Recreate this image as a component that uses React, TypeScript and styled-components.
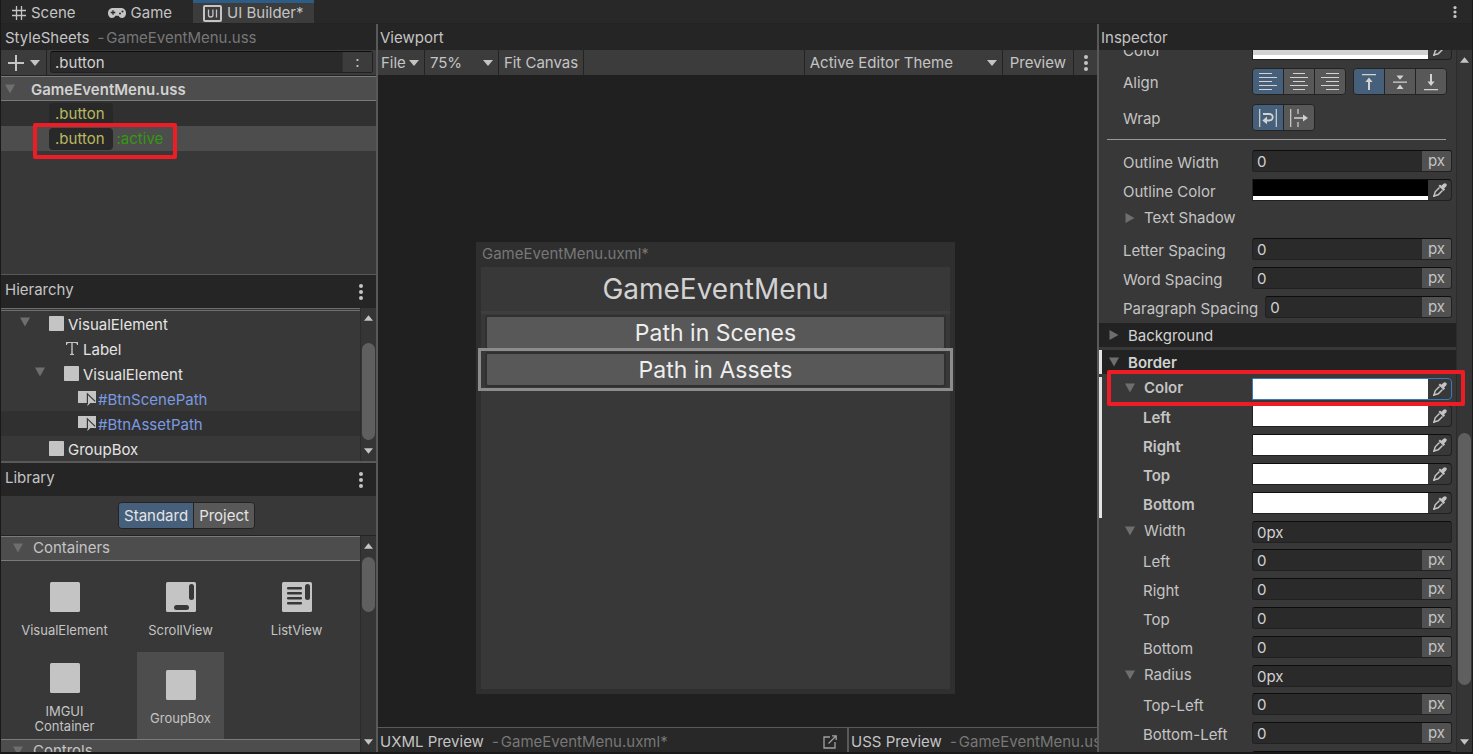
import React, { useId } from "react";
import styled, { createGlobalStyle, css } from "styled-components";

const GlobalStyle = createGlobalStyle`
  *, *::before, *::after { box-sizing: border-box; }
  body {
    margin: 0;
    background: #191919;
    color: #c4c4c4;
    font: 15px/20px Inter, "Liberation Sans", sans-serif;
  }
  button, input, select {
    margin: 0;
    padding: 0;
    border: 0;
    border-radius: 0;
    background: none;
    color: inherit;
    font: inherit;
    outline: none;
  }
  h1, h2, p, ul { margin: 0; padding: 0; font: inherit; list-style: none; }
`;

/* ---------- icons ---------- */

const Glyph = styled.svg`
  display: block;
  flex: none;
`;

const Caret = ({ dir = "down", size = "m" }: { dir?: "down" | "up"; size?: "m" | "s" }) => (
  <Glyph width={size === "m" ? 10 : 9} height="6" viewBox="0 0 10 6" fill="#c4c4c4">
    <path d={dir === "down" ? "M0 0h10L5 6z" : "M0 6h10L5 0z"} />
  </Glyph>
);

const FoldArrow = ({ open = true }: { open?: boolean }) => (
  <Glyph width="10" height="10" viewBox="0 0 10 10" fill="#6e6e6e">
    <path d={open ? "M0 0.5h10L5 9.5z" : "M0.5 0v10L9.5 5z"} />
  </Glyph>
);

const Dots = () => (
  <Glyph width="4" height="16" viewBox="0 0 4 16" fill="#c4c4c4">
    <circle cx="2" cy="2" r="2" />
    <circle cx="2" cy="8" r="2" />
    <circle cx="2" cy="14" r="2" />
  </Glyph>
);

const SmallDots = () => (
  <Glyph width="4" height="12" viewBox="0 0 4 12" fill="#c4c4c4">
    <circle cx="2" cy="1.6" r="1.6" />
    <circle cx="2" cy="6" r="1.6" />
    <circle cx="2" cy="10.4" r="1.6" />
  </Glyph>
);

const SceneIcon = () => (
  <Glyph width="14" height="14" viewBox="0 0 14 14" stroke="#c4c4c4" strokeWidth="1.3">
    <path d="M4.5 0v14M9.5 0v14M0 4.5h14M0 9.5h14" />
  </Glyph>
);

const GameIcon = () => (
  <Glyph width="18" height="10" viewBox="0 0 18 10">
    <path
      d="M5 0h8c3 0 5 2.3 5 5s-1.6 5-4 5c-1.6 0-2.6-1-3.4-2.300H7.400C6.600 9 5.600 10 4 10 1.600 10 0 7.700 0 5s2-5 5-5z"
      fill="#c4c4c4"
    />
    <path d="M5 2.200v4.600M2.700 4.500h4.600" stroke="#282828" strokeWidth="1.300" />
    <circle cx="12" cy="5.500" r="1" fill="#282828" />
    <circle cx="14.500" cy="3.500" r="1" fill="#282828" />
  </Glyph>
);

const UiIcon = () => (
  <Glyph width="19" height="17" viewBox="0 0 19 17" fill="none" stroke="#c4c4c4">
    <rect x="1" y="1" width="17" height="15" rx="1" strokeWidth="2" />
    <path d="M5.500 4.500v5.500q0 2 2.200 2t2.200-2V4.500M13.500 4.500v8" strokeWidth="1.300" />
  </Glyph>
);

const PlusIcon = () => (
  <Glyph width="16" height="16" viewBox="0 0 16 16" stroke="#c4c4c4" strokeWidth="2">
    <path d="M8 0v16M0 8h16" />
  </Glyph>
);

const BoxIcon = ({ size = 15 }: { size?: number }) => (
  <Glyph width={size} height={size} viewBox="0 0 30 30">
    <rect width="30" height="30" rx="1.500" fill="#c4c4c4" />
  </Glyph>
);

const LabelIcon = () => (
  <Glyph width="12" height="13" viewBox="0 0 12 13" fill="#c4c4c4">
    <path d="M0 0h12v3h-1c0-1.300-.6-2-2-2H6.700v10c0 .7.300 1 1.300 1v1H4v-1c1 0 1.300-.3 1.300-1V1H3c-1.400 0-2 .7-2 2H0z" />
  </Glyph>
);

const ButtonIcon = () => (
  <Glyph width="18" height="15" viewBox="0 0 18 15">
    <path d="M0 0h18v12H0z" fill="#c4c4c4" />
    <path d="M8 12.500h10V12h-5z" fill="#383838" />
    <path d="M9.500 3v12l3-3.200h4.700z" fill="#c4c4c4" />
    <path d="M9.400 13V2.800l7.800 7.600" fill="none" stroke="#383838" strokeWidth="1.200" />
  </Glyph>
);

const ScrollViewIcon = () => (
  <Glyph width="30" height="30" viewBox="0 0 30 30">
    <rect width="30" height="30" rx="1.500" fill="#c4c4c4" />
    <rect x="23" y="2" width="5" height="16" rx="2.500" fill="#383838" />
    <rect x="8" y="23" width="15" height="5" rx="2.500" fill="#383838" />
  </Glyph>
);

const ListViewIcon = () => (
  <Glyph width="30" height="30" viewBox="0 0 30 30">
    <rect width="30" height="30" rx="1.500" fill="#c4c4c4" />
    <rect x="23" y="2" width="5" height="16" rx="2.500" fill="#383838" />
    {[5, 10, 15, 20].map((y) => (
      <rect key={y} x="5" y={y} width="15" height="2.500" rx="1" fill="#383838" />
    ))}
  </Glyph>
);

const AlignIcon = ({ mode }: { mode: "left" | "center" | "right" }) => {
  const [from, to] = { left: [0, 13], center: [3, 15], right: [5, 18] }[mode];
  return (
    <Glyph width="18" height="17" viewBox="0 0 18 17" stroke="#d2d2d2">
      <path d={`M${from} .5H${to}M0 4.500H18M${from} 8.500H${to}M0 12.500H18M${from} 16.500H${to}`} />
    </Glyph>
  );
};

const VAlignIcon = ({ mode }: { mode: "top" | "middle" | "bottom" }) => (
  <Glyph width="16" height="18" viewBox="0 0 16 18" fill="#d2d2d2">
    {mode === "top" && <path d="M1 1h14v1.200H1zM8 4.500l3.600 4.500H9v8H7V9H4.400z" />}
    {mode === "middle" && <path d="M1 8.500h14v1.200H1zM4.500 2.500h7L8 6.800zM4.500 16h7L8 11.500z" />}
    {mode === "bottom" && <path d="M1 16h14v1.200H1zM7 1h2v7.500h2.600L8 13 4.400 8.500H7z" />}
  </Glyph>
);

const WrapIcon = () => (
  <Glyph width="18" height="18" viewBox="0 0 18 18" fill="none" stroke="#d2d2d2">
    <path d="M.7 0v18M17.300 0v18" strokeWidth="1.200" />
    <path d="M4 5h6.500a3 3 0 0 1 0 6.500H7" strokeWidth="1.800" />
    <path d="M8 7.500l-4.700 4L8 15.300z" fill="#d2d2d2" stroke="none" />
  </Glyph>
);

const NoWrapIcon = () => (
  <Glyph width="18" height="18" viewBox="0 0 18 18" fill="none" stroke="#d2d2d2">
    <path d="M.7 0v18M8 0v5M8 13v5" strokeWidth="1.200" />
    <path d="M4 9h10" strokeWidth="1.600" />
    <path d="M13 5.500L18 9l-5 3.500z" fill="#d2d2d2" stroke="none" />
  </Glyph>
);

const EyedropperIcon = () => (
  <Glyph width="14" height="14" viewBox="0 0 14 14">
    <path
      d="M8.400 2.800L10.500.8c.8-.8 1.900-.9 2.700-.1.800.800.700 1.900-.1 2.700l-2 2.100 1 1-1.500 1.500-5.100-5.100L7 1.400z"
      fill="#c4c4c4"
    />
    <path d="M6.500 4.500L2.200 8.800 1 13l4.200-1.200 4.300-4.300" fill="none" stroke="#c4c4c4" strokeWidth="1.500" />
    <path d="M.2 12l1.800 1.800L.2 14z" fill="#c4c4c4" />
  </Glyph>
);

const OpenIcon = () => (
  <Glyph width="14" height="14" viewBox="0 0 14 14" fill="none" stroke="#a0a0a0" strokeWidth="1.300">
    <path d="M7 2H1v11h11V7M5.500 8.500L13 1M9 .8h4.200V5" />
  </Glyph>
);

/* ---------- shared parts ---------- */

const IconButton = styled.button`
  display: flex;
  align-items: center;
  justify-content: center;
  gap: 5px;
  flex: none;
`;

const PaneHeader = styled.header<{ $tall?: boolean; $tight?: boolean }>`
  display: flex;
  align-items: flex-start;
  flex: none;
  gap: 8px;
  height: ${(p) => (p.$tall ? 33 : 26)}px;
  padding: ${(p) => (p.$tall ? "5px 13px 0 4px" : p.$tight ? "4px 2px 0" : "4px 4px 0")};
  background: #252525;
  white-space: nowrap;
  overflow: hidden;
`;

const PaneTitle = styled.h2`
  flex: none;
`;

const FileName = styled.span`
  display: flex;
  gap: 2px;
  color: #777;
  &::before { content: "-"; }
`;

const HeaderMenu = styled(IconButton)`
  margin: 4px 0 0 auto;
`;

const Splitter = styled.div`
  background: #595959;
`;

const HSplitter = styled.div<{ $thin?: boolean }>`
  flex: none;
  height: ${(p) => (p.$thin ? 1 : 2)}px;
  background: #595959;
`;

const Annotation = styled.div<{ $inset: string }>`
  position: absolute;
  inset: ${(p) => p.$inset};
  z-index: 2;
  border: 4px solid #ee1c25;
  border-radius: 2px;
  pointer-events: none;
`;

const ScrollTrack = styled.div`
  display: flex;
  flex-direction: column;
  align-items: center;
  flex: none;
  width: 16px;
  padding: 7px 0;
  border-left: 1px solid #2b2b2b;
  background: #353535;
`;

const ScrollSpace = styled.div<{ $grow: number }>`
  flex: ${(p) => p.$grow} 0 0;
`;

const ScrollThumb = styled.div<{ $grow: number }>`
  flex: ${(p) => p.$grow} 0 0;
  width: 13px;
  border-radius: 7px;
  background: #5f5f5f;
`;

/* before / size / after are the shares of the track taken by each part */
const Scrollbar = ({ before, size, after }: { before: number; size: number; after: number }) => (
  <ScrollTrack>
    <Caret dir="up" size="s" />
    <ScrollSpace $grow={before} />
    <ScrollThumb $grow={size} />
    <ScrollSpace $grow={after} />
    <Caret size="s" />
  </ScrollTrack>
);

/* ---------- window frame ---------- */

const Window = styled.div`
  display: flex;
  flex-direction: column;
  height: 100vh;
  min-height: 400px;
  padding: 0 1px 2px;
  overflow: hidden;
`;

const TabStrip = styled.nav`
  display: flex;
  flex: none;
  height: 24px;
  padding-right: 15px;
  border-bottom: 1px solid #232323;
  background: #282828;
`;

const Tab = styled.button<{ $active?: boolean }>`
  display: flex;
  align-items: center;
  gap: 5px;
  padding: 3px 10px 0 11px;
  margin-right: 11px;
  ${(p) =>
    p.$active &&
    css`
      padding: 0 10px;
      border-top: 3px solid #2c5d87;
      background: #3c3c3c;
    `}
`;

const TabMenu = styled(IconButton)`
  margin-left: auto;
`;

const Panes = styled.main`
  display: grid;
  grid-template-columns: 375px 2px minmax(0, 1fr) 2px 373px;
  flex: 1;
  min-height: 0;
`;

const Pane = styled.section`
  display: flex;
  flex-direction: column;
  min-width: 0;
  min-height: 0;
  background: #383838;
`;

/* ---------- style sheets ---------- */

const SelectorBar = styled.div`
  display: flex;
  flex: none;
  height: 26px;
  padding-right: 3px;
  border-bottom: 1px solid #232323;
  background: #3c3c3c;
`;

const AddButton = styled(IconButton)`
  width: 46px;
  padding-left: 1px;
  gap: 6px;
  border-right: 1px solid #232323;
`;

const SelectorBox = styled.div`
  display: flex;
  flex: 1;
  margin: 1px 0 2px 3px;
  border: 1px solid #212121;
  border-top-color: #0d0d0d;
  border-radius: 3px;
  background: #2a2a2a;
`;

const SelectorInput = styled.input`
  flex: 1;
  min-width: 0;
  padding: 2px 0 0 4px;
  color: #d2d2d2;
`;

const PseudoButton = styled.button`
  width: 30px;
  border-left: 1px solid #303030;
  background: #3c3c3c;
`;

const SheetRow = styled.div`
  display: flex;
  align-items: center;
  flex: none;
  gap: 16px;
  height: 25px;
  padding-left: 4px;
  border-top: 1px solid #7a7a7a;
  border-bottom: 1px solid #7a7a7a;
  background: #4d4d4d;
  color: #d2d2d2;
  font-weight: 600;
`;

const SheetName = styled.span`
  padding-top: 3px;
`;

const SelectorRow = styled.li<{ $selected?: boolean }>`
  position: relative;
  display: flex;
  align-items: center;
  gap: 4px;
  height: 25px;
  padding-left: 48px;
  background: ${(p) => (p.$selected ? "#4d4d4d" : "#303030")};
`;

const SelectorPill = styled.span`
  padding: 1px 8px 1px 6px;
  border-radius: 4px;
  background: #282828;
  color: #b9b963;
`;

const PseudoState = styled.span`
  color: #33990f;
`;

const Filler = styled.div`
  flex: 1;
  min-height: 0;
`;

/* ---------- hierarchy ---------- */

const ScrollPane = styled.div`
  display: flex;
  flex: none;
`;

const Tree = styled.ul`
  flex: 1;
  border-top: 3px double #6e6e6e;
  color: #e4e4e4;
`;

const TreeRow = styled.li<{ $depth: number; $hover?: boolean; $named?: boolean }>`
  display: flex;
  align-items: center;
  gap: 4px;
  height: 25px;
  padding-left: ${(p) => 3 + p.$depth * 15}px;
  background: ${(p) => (p.$hover ? "#303030" : "transparent")};
  color: ${(p) => (p.$named ? "#7b9ae0" : "inherit")};
`;

const TreeName = styled.span`
  padding-top: 2px;
`;

const TreeFold = styled.span`
  display: flex;
  width: 26px;
  padding: 0 0 4px 1px;
`;

const TreeIcon = styled.span`
  display: flex;
  justify-content: center;
  width: 15px;
`;

/* ---------- library ---------- */

const SegmentBar = styled.div`
  display: flex;
  justify-content: center;
  align-items: center;
  flex: none;
  height: 40px;
  padding-right: 4px;
  border-bottom: 1px solid #232323;
`;

const Segments = styled.div`
  display: flex;
  border: 1px solid #232323;
  border-radius: 4px;
  overflow: hidden;
`;

const Segment = styled.button<{ $on?: boolean }>`
  height: 25px;
  padding: 0 5px;
  background: ${(p) => (p.$on ? "#46607c" : "#585858")};
  color: #e4e4e4;
  & + & { border-left: 1px solid #232323; }
`;

const LibraryBody = styled.div`
  display: flex;
  flex: none;
  height: 216px;
  overflow: hidden;
`;

const LibraryList = styled.div`
  flex: 1;
`;

const GroupHeader = styled.div`
  display: flex;
  align-items: center;
  gap: 10px;
  height: 25px;
  padding: 0 0 2px 12px;
  border-top: 1px solid #7a7a7a;
  border-bottom: 1px solid #7a7a7a;
  background: #4d4d4d;
`;

const Tiles = styled.div`
  display: grid;
  grid-template-columns: repeat(3, 87px);
  grid-auto-rows: 87px;
  gap: 1px 29px;
  padding: 3px 0 0 20px;
`;

const Tile = styled.button<{ $hover?: boolean }>`
  display: flex;
  flex-direction: column;
  align-items: center;
  justify-content: center;
  gap: 11px;
  padding-top: 5px;
  background: ${(p) => (p.$hover ? "#4d4d4d" : "transparent")};
  font-size: 13px;
  line-height: 15px;
`;

/* ---------- viewport ---------- */

const Toolbar = styled.div`
  display: flex;
  flex: none;
  height: 25px;
  background: #3c3c3c;
`;

const ToolButton = styled.button<{ $wide?: boolean }>`
  display: flex;
  align-items: center;
  gap: 3px;
  padding: 1px ${(p) => (p.$wide ? 7 : 5)}px 0;
  border-right: 1px solid #232323;
`;

const FileButton = styled(ToolButton)`
  padding-left: 3px;
`;

const SelectBox = styled.label<{ $wide?: boolean }>`
  display: flex;
  align-items: center;
  flex: none;
  width: ${(p) => (p.$wide ? 199 : 74)}px;
  padding: 1px 5px 0;
  border: 0 solid #232323;
  border-width: ${(p) => (p.$wide ? "0 1px" : "0 1px 0 0")};
  ${(p) => p.$wide && "margin-left: auto;"}
`;

const Select = styled.select`
  flex: 1;
  min-width: 0;
  appearance: none;
`;

const ToolMenu = styled(IconButton)`
  width: 23px;
`;

const Stage = styled.div`
  flex: 1;
  min-height: 0;
  padding: 167px 0 0 98px;
  background: #202020;
  overflow: hidden;
`;

const Canvas = styled.div`
  display: flex;
  flex-direction: column;
  width: 479px;
  height: 452px;
  padding: 0 5px 5px;
  background: #2f2f2f;
`;

const CanvasName = styled.div`
  height: 25px;
  padding: 2px 1px 0;
  color: #777;
`;

const Document = styled.div`
  flex: 1;
  background: #383838;
`;

const DocumentTitle = styled.h1`
  height: 47px;
  border-bottom: 3px solid #3e3e3e;
  color: #d2d2d2;
  font-size: 28px;
  line-height: 44px;
  text-align: center;
`;

const DocumentItem = styled.div<{ $selected?: boolean }>`
  display: flex;
  padding: 1px 4px;
  height: 37px;
  ${(p) =>
    p.$selected &&
    css`
      outline: 3px solid #8c8c8c;
      position: relative;
    `}
`;

const DocumentButton = styled.button`
  flex: 1;
  border: 2px solid #303030;
  border-radius: 3px;
  background: #585858;
  color: #eee;
  font-size: 23px;
  line-height: 28px;
`;

const PreviewBar = styled.div`
  display: grid;
  grid-template-columns: 469px 2px minmax(0, 1fr);
  flex: none;
  height: 25px;
  border-top: 1px solid #595959;
`;

const PreviewHeader = styled(PaneHeader)`
  height: 24px;
  padding: 4px 10px 0 2px;
  background: #282828;
`;

const OpenButton = styled(IconButton)`
  margin: 3px 0 0 auto;
`;

/* ---------- inspector ---------- */

const InspectorBody = styled.div`
  display: flex;
  flex: 1;
  min-height: 0;
`;

const Properties = styled.div`
  flex: 1;
  min-width: 0;
  overflow-x: visible;
  overflow-y: clip;
`;

/* the list is scrolled part way into its first visible row */
const PropertyList = styled.div`
  margin-top: -15px;
`;

const rowHeights = { icons: 36, short: 28, tall: 30, field: 29 };

const Row = styled.div<{ $kind?: keyof typeof rowHeights; $nested?: boolean; $bold?: boolean }>`
  display: flex;
  align-items: flex-start;
  gap: 7px;
  height: ${(p) => rowHeights[p.$kind ?? "field"]}px;
  padding: ${(p) => (p.$kind === "icons" ? 4 : 3)}px 4px 0 ${(p) => (p.$nested ? 44 : 24)}px;
  font-weight: ${(p) => (p.$bold ? 600 : 400)};
`;

const RowLabel = styled.label<{ $fixed?: boolean }>`
  flex: ${(p) => (p.$fixed ? "none" : 1)};
  padding-top: 3px;
  white-space: nowrap;
`;

const RowCaption = styled.span`
  flex: 1;
  padding-top: 5px;
`;

const FoldLabel = styled.div`
  display: flex;
  align-items: center;
  flex: 1;
  gap: 9px;
  padding-left: 2px;
`;

const Box = styled.div<{ $fill?: boolean; $focus?: boolean }>`
  display: flex;
  flex: ${(p) => (p.$fill ? "1 1 0" : "none")};
  width: 200px;
  height: 22px;
  border: 1px solid ${(p) => (p.$focus ? "#3a79bb" : "#212121")};
  border-top-color: ${(p) => (p.$focus ? "#3a79bb" : "#0d0d0d")};
  border-radius: 3px;
  background: #2a2a2a;
  overflow: hidden;
  font-weight: 400;
`;

const ColorBox = styled(Box)`
  background: #383838;
  border-radius: 0 4px 4px 0;
`;

const ValueInput = styled.input`
  flex: 1;
  min-width: 0;
  padding: 1px 0 0 4px;
  color: #d2d2d2;
`;

const UnitButton = styled.button`
  width: 29px;
  background: #515151;
  line-height: 18px;
`;

const Swatch = styled.input`
  display: block;
  width: 100%;
  height: 16px;
  appearance: none;
  &::-webkit-color-swatch-wrapper { padding: 0; }
  &::-webkit-color-swatch { border: 0; border-radius: 0; }
`;

/* the strip under the swatch shows the alpha value */
const SwatchStack = styled.div`
  flex: 1;
  border-bottom: 4px solid #fff;
`;

const PickButton = styled(IconButton)`
  width: 23px;
`;

const ToggleGroup = styled.div`
  display: flex;
  flex: none;
  border: 1px solid #232323;
  border-radius: 4px;
  overflow: hidden;
`;

const Toggle = styled.button<{ $on?: boolean }>`
  display: flex;
  align-items: center;
  justify-content: center;
  width: 30px;
  height: 25px;
  background: ${(p) => (p.$on ? "#46607c" : "#585858")};
  & + & { width: 31px; border-left: 1px solid #232323; }
`;

const Toggles = styled.div`
  display: flex;
  gap: 7px;
  width: 200px;
`;

const Rule = styled.hr`
  height: 1px;
  margin: 3px 10px 7px 8px;
  border: 0;
  background: #999;
`;

const SectionHeader = styled.div<{ $changed?: boolean }>`
  display: flex;
  align-items: center;
  gap: 9px;
  height: 24px;
  margin: ${(p) => (p.$changed ? "3px 0" : "1px 0 0")};
  padding-left: ${(p) => (p.$changed ? 7 : 10)}px;
  border-left: ${(p) => (p.$changed ? "3px solid #e4e4e4" : "0")};
  background: #222;
  color: #d2d2d2;
  font-weight: ${(p) => (p.$changed ? 600 : 400)};
`;

const SectionName = styled.span`
  padding-top: 1px;
`;

const ChangedGroup = styled.div`
  border-left: 3px solid #e4e4e4;
  ${Row} { padding-left: 41px; }
`;

const ColorFoldRow = styled.div`
  position: relative;
  display: flex;
  align-items: flex-start;
  height: 25px;
  padding: 1px 4px 0 21px;
  font-weight: 600;
`;

type FieldProps = { label: string; nested?: boolean; bold?: boolean };

const LengthRow = ({ label, nested, fill }: FieldProps & { fill?: boolean }) => {
  const id = useId();
  return (
    <Row $nested={nested}>
      <RowLabel htmlFor={id} $fixed={fill}>{label}</RowLabel>
      <Box $fill={fill}>
        <ValueInput id={id} defaultValue="0" />
        <UnitButton>px</UnitButton>
      </Box>
    </Row>
  );
};

const ColorField = ({ id, value, focus }: { id: string; value: string; focus?: boolean }) => (
  <ColorBox $focus={focus}>
    <SwatchStack>
      <Swatch type="color" id={id} defaultValue={value} />
    </SwatchStack>
    <PickButton aria-label="Pick colour"><EyedropperIcon /></PickButton>
  </ColorBox>
);

const ColorRow = ({ label, nested, bold, value }: FieldProps & { value: string }) => {
  const id = useId();
  return (
    <Row $nested={nested} $bold={bold}>
      <RowLabel htmlFor={id}>{label}</RowLabel>
      <ColorField id={id} value={value} />
    </Row>
  );
};

const ShorthandRow = ({ label }: FieldProps) => {
  const id = useId();
  return (
    <Row $kind="short">
      <FoldLabel>
        <FoldArrow />
        <label htmlFor={id}>{label}</label>
      </FoldLabel>
      <Box>
        <ValueInput id={id} defaultValue="0px" />
      </Box>
    </Row>
  );
};

/* ---------- panes ---------- */

const LeftPane = () => (
  <Pane>
    <PaneHeader>
      <PaneTitle>StyleSheets</PaneTitle>
      <FileName>GameEventMenu.uss</FileName>
    </PaneHeader>
    <SelectorBar>
      <AddButton aria-label="Add"><PlusIcon /><Caret /></AddButton>
      <SelectorBox>
        <SelectorInput aria-label="New selector" defaultValue=".button" />
        <PseudoButton>:</PseudoButton>
      </SelectorBox>
    </SelectorBar>
    <SheetRow><FoldArrow /><SheetName>GameEventMenu.uss</SheetName></SheetRow>
    <ul>
      <SelectorRow><SelectorPill>.button</SelectorPill></SelectorRow>
      <SelectorRow $selected>
        <SelectorPill>.button</SelectorPill>
        <PseudoState>:active</PseudoState>
        <Annotation $inset="-3px 199px -8px 32px" />
      </SelectorRow>
    </ul>
    <Filler />
    <HSplitter $thin />
    <PaneHeader $tall>
      <PaneTitle>Hierarchy</PaneTitle>
      <HeaderMenu aria-label="Hierarchy menu"><Dots /></HeaderMenu>
    </PaneHeader>
    <ScrollPane>
      <Tree>
        <TreeRow $depth={1}>
          <TreeFold><FoldArrow /></TreeFold>
          <TreeIcon><BoxIcon /></TreeIcon>
          <TreeName>VisualElement</TreeName>
        </TreeRow>
        <TreeRow $depth={4}>
          <TreeIcon><LabelIcon /></TreeIcon>
          <TreeName>Label</TreeName>
        </TreeRow>
        <TreeRow $depth={2}>
          <TreeFold><FoldArrow /></TreeFold>
          <TreeIcon><BoxIcon /></TreeIcon>
          <TreeName>VisualElement</TreeName>
        </TreeRow>
        <TreeRow $depth={5} $named>
          <TreeIcon><ButtonIcon /></TreeIcon>
          <TreeName>#BtnScenePath</TreeName>
        </TreeRow>
        <TreeRow $depth={5} $named $hover>
          <TreeIcon><ButtonIcon /></TreeIcon>
          <TreeName>#BtnAssetPath</TreeName>
        </TreeRow>
        <TreeRow $depth={3}>
          <TreeIcon><BoxIcon /></TreeIcon>
          <TreeName>GroupBox</TreeName>
        </TreeRow>
      </Tree>
      <Scrollbar before={22} size={97} after={8} />
    </ScrollPane>
    <HSplitter />
    <PaneHeader $tall>
      <PaneTitle>Library</PaneTitle>
      <HeaderMenu aria-label="Library menu"><Dots /></HeaderMenu>
    </PaneHeader>
    <SegmentBar>
      <Segments>
        <Segment $on>Standard</Segment>
        <Segment>Project</Segment>
      </Segments>
    </SegmentBar>
    <LibraryBody>
      <LibraryList>
        <GroupHeader><FoldArrow />Containers</GroupHeader>
        <Tiles>
          <Tile><BoxIcon size={30} />VisualElement</Tile>
          <Tile><ScrollViewIcon />ScrollView</Tile>
          <Tile><ListViewIcon />ListView</Tile>
          <Tile><BoxIcon size={30} />IMGUI Container</Tile>
          <Tile $hover><BoxIcon size={30} />GroupBox</Tile>
        </Tiles>
        <GroupHeader><FoldArrow />Controls</GroupHeader>
      </LibraryList>
      <Scrollbar before={8} size={55} after={127} />
    </LibraryBody>
  </Pane>
);

const CenterPane = () => (
  <Pane>
    <PaneHeader $tight><PaneTitle>Viewport</PaneTitle></PaneHeader>
    <Toolbar>
      <FileButton>File<Caret /></FileButton>
      <SelectBox>
        <Select aria-label="Zoom"><option>75%</option></Select>
        <Caret />
      </SelectBox>
      <ToolButton>Fit Canvas</ToolButton>
      <SelectBox $wide>
        <Select aria-label="Theme"><option>Active Editor Theme</option></Select>
        <Caret />
      </SelectBox>
      <ToolButton $wide>Preview</ToolButton>
      <ToolMenu aria-label="Viewport menu"><Dots /></ToolMenu>
    </Toolbar>
    <Stage>
      <Canvas>
        <CanvasName>GameEventMenu.uxml*</CanvasName>
        <Document>
          <DocumentTitle>GameEventMenu</DocumentTitle>
          <DocumentItem><DocumentButton>Path in Scenes</DocumentButton></DocumentItem>
          <DocumentItem $selected><DocumentButton>Path in Assets</DocumentButton></DocumentItem>
        </Document>
      </Canvas>
    </Stage>
    <PreviewBar>
      <PreviewHeader>
        <PaneTitle>UXML Preview</PaneTitle>
        <FileName>GameEventMenu.uxml*</FileName>
        <OpenButton aria-label="Open in editor"><OpenIcon /></OpenButton>
      </PreviewHeader>
      <Splitter />
      <PreviewHeader>
        <PaneTitle>USS Preview</PaneTitle>
        <FileName>GameEventMenu.uss</FileName>
      </PreviewHeader>
    </PreviewBar>
  </Pane>
);

const InspectorPane = () => {
  const borderId = useId();
  return (
    <Pane>
      <PaneHeader $tight><PaneTitle>Inspector</PaneTitle></PaneHeader>
      <InspectorBody>
        <Properties>
          <PropertyList>
            <ColorRow label="Color" value="#d2d2d2" />
            <Row $kind="icons">
              <RowCaption>Align</RowCaption>
              <Toggles>
                <ToggleGroup>
                  <Toggle $on aria-label="Left"><AlignIcon mode="left" /></Toggle>
                  <Toggle aria-label="Center"><AlignIcon mode="center" /></Toggle>
                  <Toggle aria-label="Right"><AlignIcon mode="right" /></Toggle>
                </ToggleGroup>
                <ToggleGroup>
                  <Toggle $on aria-label="Top"><VAlignIcon mode="top" /></Toggle>
                  <Toggle aria-label="Middle"><VAlignIcon mode="middle" /></Toggle>
                  <Toggle aria-label="Bottom"><VAlignIcon mode="bottom" /></Toggle>
                </ToggleGroup>
              </Toggles>
            </Row>
            <Row $kind="icons">
              <RowCaption>Wrap</RowCaption>
              <Toggles>
                <ToggleGroup>
                  <Toggle $on aria-label="Wrap"><WrapIcon /></Toggle>
                  <Toggle aria-label="No wrap"><NoWrapIcon /></Toggle>
                </ToggleGroup>
              </Toggles>
            </Row>
            <Rule />
            <LengthRow label="Outline Width" />
            <ColorRow label="Outline Color" value="#000000" />
            <Row $kind="tall">
              <FoldLabel><FoldArrow open={false} />Text Shadow</FoldLabel>
            </Row>
            <LengthRow label="Letter Spacing" />
            <LengthRow label="Word Spacing" />
            <LengthRow label="Paragraph Spacing" fill />
            <SectionHeader><FoldArrow open={false} /><SectionName>Background</SectionName></SectionHeader>
            <SectionHeader $changed><FoldArrow /><SectionName>Border</SectionName></SectionHeader>
            <ChangedGroup>
              <ColorFoldRow>
                <FoldLabel>
                  <FoldArrow />
                  <label htmlFor={borderId}>Color</label>
                </FoldLabel>
                <ColorField id={borderId} value="#ffffff" focus />
                <Annotation $inset="-7px -9px -4px 5px" />
              </ColorFoldRow>
              {["Left", "Right", "Top", "Bottom"].map((s) => (
                <ColorRow key={s} label={s} nested bold value="#ffffff" />
              ))}
            </ChangedGroup>
            <ShorthandRow label="Width" />
            {["Left", "Right", "Top", "Bottom"].map((s) => (
              <LengthRow key={s} label={s} nested />
            ))}
            <ShorthandRow label="Radius" />
            {["Top-Left", "Bottom-Left", "Top-Right"].map((s) => (
              <LengthRow key={s} label={s} nested />
            ))}
          </PropertyList>
        </Properties>
        <Scrollbar before={367} size={249} after={54} />
      </InspectorBody>
    </Pane>
  );
};

export default function App() {
  return (
    <>
      <GlobalStyle />
      <Window>
        <TabStrip>
          <Tab><SceneIcon />Scene</Tab>
          <Tab><GameIcon />Game</Tab>
          <Tab $active><UiIcon />UI Builder*</Tab>
          <TabMenu aria-label="Window menu"><SmallDots /></TabMenu>
        </TabStrip>
        <Panes>
          <LeftPane />
          <Splitter />
          <CenterPane />
          <Splitter />
          <InspectorPane />
        </Panes>
      </Window>
    </>
  );
}
